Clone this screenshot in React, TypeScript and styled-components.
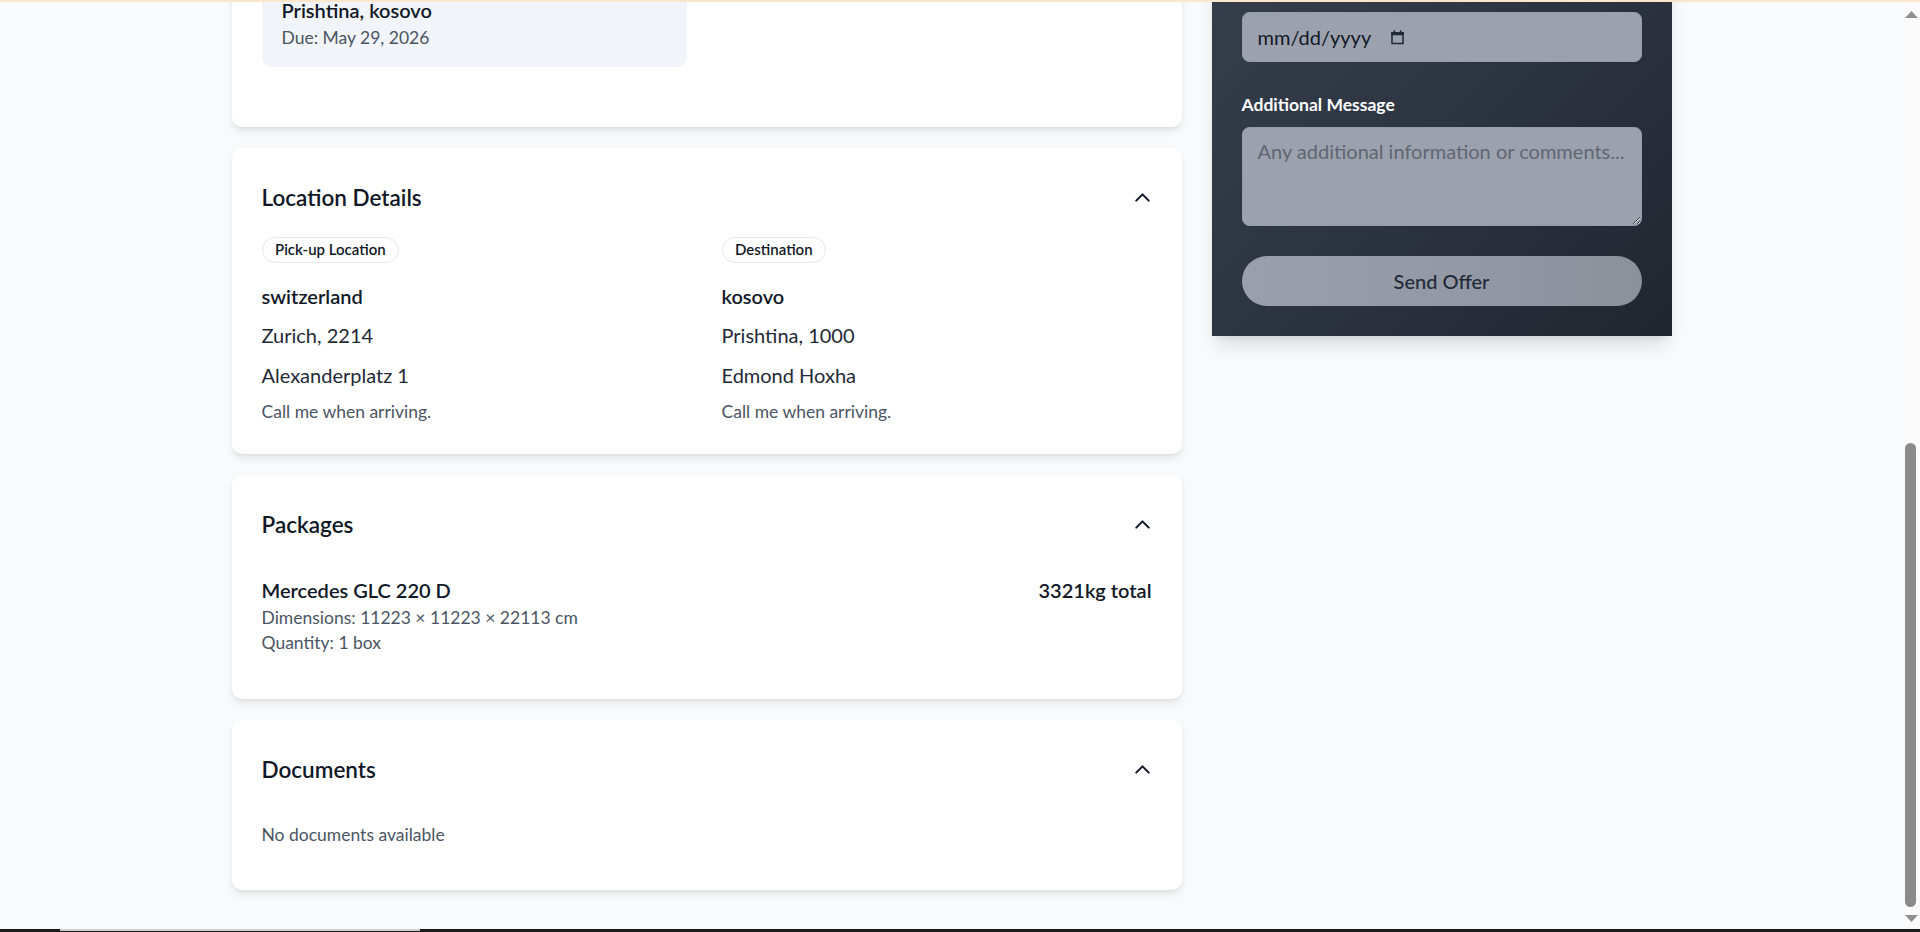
import React from "react";
import styled, { createGlobalStyle } from "styled-components";
import { ChevronUp } from "lucide-react";

const GlobalStyle = createGlobalStyle`
  html, body { margin: 0; padding: 0; height: 100%; overflow: hidden; }
  body {
    background: #f9fafb;
    font-family: Lato, "Segoe UI", "Noto Sans", sans-serif;
    color: #111827;
  }
  #root { height: 100%; }
  *, *::before, *::after { box-sizing: border-box; }
`;

const Screen = styled.div`
  height: 100vh;
  display: flex;
  flex-direction: column;
  background: #f9fafb;
`;

const TopEdge = styled.div`
  flex: none;
  height: 2px;
  background: #fce6cc;
`;

const Body = styled.div`
  flex: 1;
  min-height: 0;
  display: flex;
`;

const Viewport = styled.main`
  flex: 1;
  min-width: 0;
  overflow: hidden;
  display: flex;
  flex-direction: column;
  justify-content: flex-end;
`;

const Zoomed = styled.div`
  zoom: 1.25;
  padding-bottom: 31px;
`;

const Container = styled.div`
  width: 1152px;
  margin: 0 auto;
  display: grid;
  grid-template-columns: repeat(3, minmax(0, 1fr));
  gap: 24px;
  align-items: start;
`;

const LeftColumn = styled.div`
  grid-column: span 2;
  display: flex;
  flex-direction: column;
  gap: 17px;
`;

const Card = styled.section`
  background: #ffffff;
  border-radius: 8px;
  padding: 24px;
  box-shadow: 0 4px 8px -1px rgba(0, 0, 0, 0.09), 0 2px 4px -2px rgba(0, 0, 0, 0.08);
`;

const CardHeader = styled.div`
  height: 30px;
  margin-bottom: 16px;
  display: flex;
  align-items: center;
  justify-content: space-between;
`;

const CardTitle = styled.h2`
  margin: 0;
  font-size: 18px;
  line-height: 28px;
  font-weight: 600;
  color: #111827;
`;

const ToggleButton = styled.button`
  border: 0;
  background: none;
  padding: 0;
  margin-right: -3px;
  display: flex;
  color: #111827;
  cursor: pointer;
`;

const StopGrid = styled.div`
  display: grid;
  grid-template-columns: repeat(2, minmax(0, 1fr));
  gap: 32px;
  margin-bottom: 24px;
`;

const StopBox = styled.div`
  background: #f1f4f8;
  border-radius: 8px;
  padding: 16px 16px 14px;
`;

const StopCity = styled.div`
  font-size: 16px;
  line-height: 24px;
  font-weight: 600;
  color: #111827;
`;

const StopDue = styled.div`
  font-size: 14px;
  line-height: 20px;
  color: #4b5563;
`;

const LocationGrid = styled.div`
  display: grid;
  grid-template-columns: repeat(2, minmax(0, 1fr));
  gap: 24px;
`;

const LocationColumn = styled.div`
  display: flex;
  flex-direction: column;
  align-items: flex-start;
`;

const Pill = styled.span`
  margin-top: 1px;
  margin-bottom: 14.5px;
  padding: 1px 10px;
  border: 1px solid #e5e7eb;
  border-radius: 9999px;
  background: #ffffff;
  font-size: 12px;
  line-height: 17px;
  font-weight: 600;
  color: #111827;
`;

const Country = styled.div`
  font-size: 16px;
  line-height: 24px;
  font-weight: 600;
  color: #111827;
  margin-bottom: 7.5px;
`;

const AddressLine = styled.div`
  font-size: 16px;
  line-height: 24px;
  color: #1f2937;
  margin-bottom: 7.5px;
`;

const Note = styled.div`
  font-size: 14px;
  line-height: 20px;
  color: #4b5563;
`;

const PackageRow = styled.div`
  display: flex;
  justify-content: space-between;
  align-items: flex-start;
  padding: 10px 0 11px;
`;

const PackageName = styled.div`
  font-size: 16px;
  line-height: 24px;
  font-weight: 600;
  color: #111827;
`;

const PackageMeta = styled.div`
  font-size: 14px;
  line-height: 20px;
  color: #4b5563;
`;

const PackageWeight = styled.div`
  font-size: 16px;
  line-height: 24px;
  font-weight: 600;
  color: #111827;
`;

const EmptyText = styled.p`
  margin: 0;
  padding: 11px 0;
  font-size: 14px;
  line-height: 20px;
  color: #4b5563;
`;

const OfferPanel = styled.aside`
  padding: 54px 24px 24px;
  background: linear-gradient(135deg, #363f4d 0%, #2c3441 50%, #20262f 100%);
  box-shadow: 0 10px 15px -3px rgba(0, 0, 0, 0.12), 0 4px 6px -4px rgba(0, 0, 0, 0.1);
  color: #ffffff;
`;

const Field = styled.div`
  margin-bottom: 24px;
`;

const FieldLabel = styled.label`
  display: block;
  margin-bottom: 8px;
  font-size: 14px;
  line-height: 20px;
  font-weight: 700;
  color: #ffffff;
`;

const DateField = styled.div`
  height: 40px;
  padding: 0 12px;
  display: flex;
  align-items: center;
  background: #9ca2ad;
  border: 1px solid #979da8;
  border-radius: 6px;
  font-size: 16px;
  color: #111827;
`;

const DateText = styled.span`
  width: 106px;
  flex: none;
`;

const MessageArea = styled.textarea`
  display: block;
  width: 100%;
  height: 79px;
  padding: 6px 12px;
  background: #9ca2ad;
  border: 1px solid #979da8;
  border-radius: 6px;
  font-family: inherit;
  font-size: 16px;
  line-height: 24px;
  color: #111827;
  resize: vertical;
  outline: none;

  &::placeholder {
    color: #5f6673;
  }
`;

const SubmitButton = styled.button`
  display: block;
  width: 100%;
  height: 40px;
  border: 0;
  border-radius: 9999px;
  background: linear-gradient(90deg, #9aa0ab 0%, #949aa5 50%, #8b919b 100%);
  font-family: inherit;
  font-size: 16px;
  font-weight: 500;
  color: #1f2937;
  cursor: pointer;
`;

const ScrollTrack = styled.div`
  flex: none;
  width: 17px;
  background: #fafafa;
  display: flex;
  flex-direction: column;
`;

const ScrollArrow = styled.div<{ $h: number }>`
  flex: none;
  height: ${(p) => p.$h}px;
  display: flex;
  align-items: center;
  justify-content: center;
`;

const ScrollSpacer = styled.div`
  flex: 1;
`;

const ScrollThumb = styled.div`
  flex: none;
  height: 464px;
  width: 11px;
  margin-left: 2px;
  border-radius: 6px;
  background: #8a8a8a;
`;

const Taskbar = styled.div`
  flex: none;
  height: 3px;
  background: #1b1b1b;
  display: flex;
`;

const TaskbarSegment = styled.div`
  margin-left: 60px;
  width: 360px;
  height: 2px;
  background: #cfcfcf;
`;

const Chevron = () => (
  <ToggleButton type="button" aria-label="Collapse section">
    <ChevronUp size={20} strokeWidth={2} />
  </ToggleButton>
);

const CalendarIcon = () => (
  <svg width="12" height="12" viewBox="0 0 12 12" aria-hidden="true">
    <rect x="1" y="1.6" width="10" height="2.6" fill="#1f2937" />
    <rect x="1.6" y="2.2" width="8.8" height="8.6" fill="none" stroke="#1f2937" strokeWidth="1.2" />
    <rect x="2.8" y="0.3" width="1.3" height="2" fill="#1f2937" />
    <rect x="7.9" y="0.3" width="1.3" height="2" fill="#1f2937" />
  </svg>
);

const ArrowUp = () => (
  <svg width="13" height="7" viewBox="0 0 13 7" aria-hidden="true">
    <polygon points="0,7 6.5,0 13,7" fill="#8f8f8f" />
  </svg>
);

const ArrowDown = () => (
  <svg width="13" height="7" viewBox="0 0 13 7" aria-hidden="true">
    <polygon points="0,0 13,0 6.5,7" fill="#8f8f8f" />
  </svg>
);

export default function App() {
  return (
    <>
      <GlobalStyle />
      <Screen>
        <TopEdge />
        <Body>
          <Viewport>
            <Zoomed>
              <Container>
                <LeftColumn>
                  <Card>
                    <StopGrid>
                      <StopBox>
                        <StopCity>Prishtina, kosovo</StopCity>
                        <StopDue>Due: May 29, 2026</StopDue>
                      </StopBox>
                    </StopGrid>
                  </Card>

                  <Card>
                    <CardHeader>
                      <CardTitle>Location Details</CardTitle>
                      <Chevron />
                    </CardHeader>
                    <LocationGrid>
                      <LocationColumn>
                        <Pill>Pick-up Location</Pill>
                        <Country>switzerland</Country>
                        <AddressLine>Zurich, 2214</AddressLine>
                        <AddressLine>Alexanderplatz 1</AddressLine>
                        <Note>Call me when arriving.</Note>
                      </LocationColumn>
                      <LocationColumn>
                        <Pill>Destination</Pill>
                        <Country>kosovo</Country>
                        <AddressLine>Prishtina, 1000</AddressLine>
                        <AddressLine>Edmond Hoxha</AddressLine>
                        <Note>Call me when arriving.</Note>
                      </LocationColumn>
                    </LocationGrid>
                  </Card>

                  <Card>
                    <CardHeader>
                      <CardTitle>Packages</CardTitle>
                      <Chevron />
                    </CardHeader>
                    <PackageRow>
                      <div>
                        <PackageName>Mercedes GLC 220 D</PackageName>
                        <PackageMeta>Dimensions: 11223 × 11223 × 22113 cm</PackageMeta>
                        <PackageMeta>Quantity: 1 box</PackageMeta>
                      </div>
                      <PackageWeight>3321kg total</PackageWeight>
                    </PackageRow>
                  </Card>

                  <Card>
                    <CardHeader>
                      <CardTitle>Documents</CardTitle>
                      <Chevron />
                    </CardHeader>
                    <EmptyText>No documents available</EmptyText>
                  </Card>
                </LeftColumn>

                <OfferPanel>
                  <Field>
                    <DateField aria-label="Date">
                      <DateText>mm/dd/yyyy</DateText>
                      <CalendarIcon />
                    </DateField>
                  </Field>
                  <Field>
                    <FieldLabel htmlFor="message">Additional Message</FieldLabel>
                    <MessageArea
                      id="message"
                      placeholder="Any additional information or comments..."
                    />
                  </Field>
                  <SubmitButton type="button">Send Offer</SubmitButton>
                </OfferPanel>
              </Container>
            </Zoomed>
          </Viewport>
          <ScrollTrack>
            <ScrollArrow $h={25}>
              <ArrowUp />
            </ScrollArrow>
            <ScrollSpacer />
            <ScrollThumb />
            <ScrollArrow $h={22}>
              <ArrowDown />
            </ScrollArrow>
          </ScrollTrack>
        </Body>
        <Taskbar>
          <TaskbarSegment />
        </Taskbar>
      </Screen>
    </>
  );
}
